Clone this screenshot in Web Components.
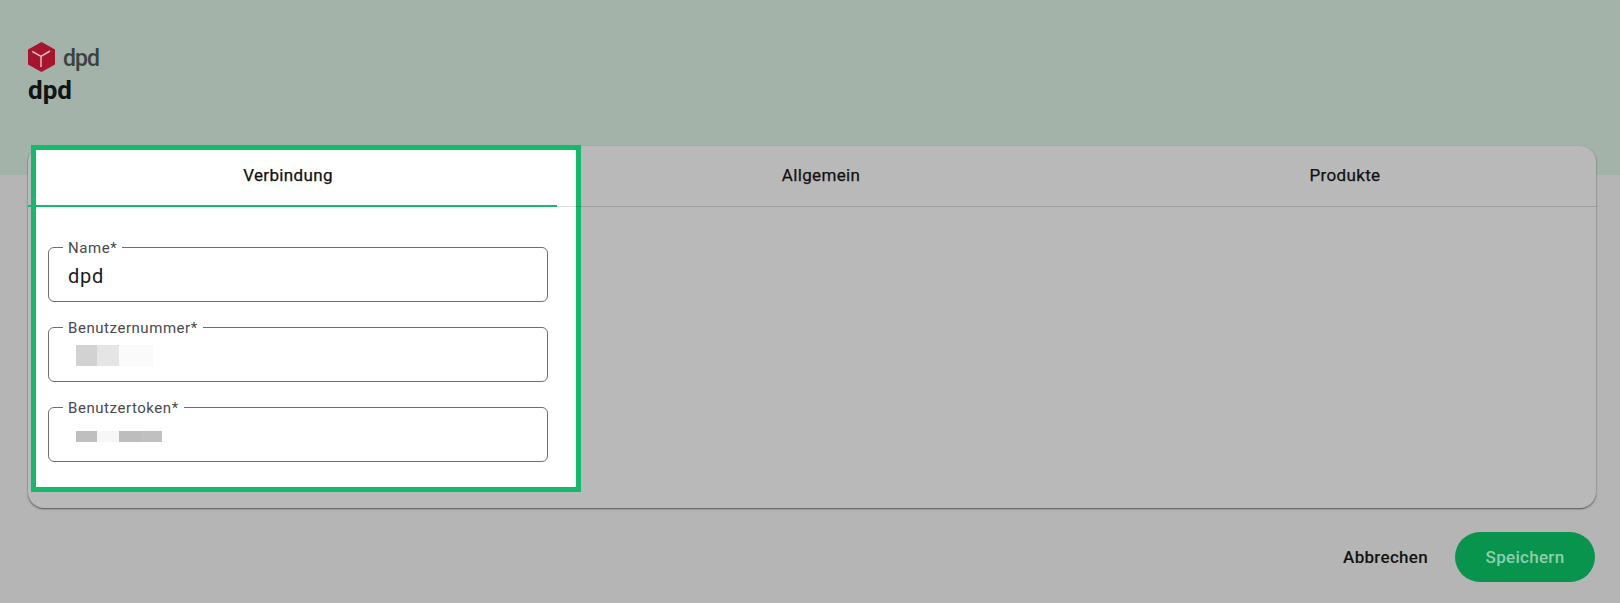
<!DOCTYPE html>
<html lang="de"><head><meta charset="utf-8"><title>dpd</title>
<style>
html,body{margin:0;padding:0}
body{height:603px;overflow:hidden;font-family:Roboto,"Liberation Sans",sans-serif;background:linear-gradient(#a3b3aa 0 175px,#b5b5b5 175px)}
</style></head><body>
<dpd-app></dpd-app>
<template id="app-t"><style>
:host{display:block;padding:42px 24px 0 28px}
.actions{display:flex;justify-content:flex-end;align-items:center;gap:27px;margin-top:24px;padding-right:1px}
</style>
<brand-head></brand-head>
<settings-card></settings-card>
<div class="actions"><action-btn>Abbrechen</action-btn><action-btn primary>Speichern</action-btn></div>
</template>

<template id="head-t"><style>
:host{display:block;height:104px;color:#111}
.logo{display:flex;align-items:center;gap:8px;height:30px}
svg{display:block;width:27px;height:30px}
.word{font-size:23px;font-weight:500;color:#3b4140;letter-spacing:-1px;line-height:30px;position:relative;top:1.5px}
h1{margin:0;font-size:26px;line-height:30px;font-weight:700;color:#101412;margin-top:3px}
</style>
<div class="logo"><svg viewBox="0 0 27 30"><path d="M13.5 0 27 7.6V22.4L13.5 30 0 22.4V7.6Z" fill="#a6142d"/><path d="M4.3 9.5 13 14.5 22 9M13 14.5V25" fill="none" stroke="#dcbcc0" stroke-width="1.5"/></svg><span class="word">dpd</span></div>
<h1>dpd</h1>
</template>

<template id="card-t"><style>
:host{display:block;position:relative;height:362px;background:#b9b9b9;border-radius:16px;box-shadow:0 1px 2px rgba(0,0,0,.55)}
.spot{position:absolute;left:3px;top:-1px;width:540px;height:337px;background:#fff;border:5px solid #13ba6c}
.tabs{position:relative;display:grid;grid-template-columns:520px 546px 502px;height:60px;border-bottom:1px solid rgba(0,0,0,.15)}
.ind{position:absolute;left:0;bottom:-1px;width:529px;height:2px;background:#13ba6c}
.panel{position:relative;display:flex;flex-direction:column;gap:25px;width:500px;padding:40px 0 0 20px}
</style>
<div class="spot"></div>
<div class="tabs"><tab-item>Verbindung</tab-item><tab-item>Allgemein</tab-item><tab-item>Produkte</tab-item><div class="ind"></div></div>
<div class="panel">
<text-field label="Name*"><span class="val">dpd</span></text-field>
<text-field label="Benutzernummer*"><blur-patch shades="#d2d2d2 #e5e5e5 #fafafa" widths="21 22 34"></blur-patch></text-field>
<text-field label="Benutzertoken*"><blur-patch class="thin" shades="#bfbfbf #f7f7f7 #bdbdbd #c0c0c0" widths="21 22 22 21"></blur-patch></text-field>
</div>
</template>

<template id="tab-t"><style>
:host{display:flex;align-items:center;justify-content:center;padding-bottom:2px;font-size:17px;font-weight:400;-webkit-text-stroke:.25px #111;letter-spacing:.35px;color:#111}
</style><slot></slot></template>

<template id="field-t"><style>
:host{display:block;height:55px}
fieldset{box-sizing:border-box;height:55px;margin:0;padding:0 19px;border:1px solid #6f6f6f;border-radius:6px;display:flex;align-items:center}
legend{padding:0 5px 0 5px;margin-left:-5px;height:0;line-height:0;font-size:15px;letter-spacing:.55px;color:#4a4a4a}
.in{display:flex;align-items:center;box-sizing:border-box;padding-top:2px;font-size:20px;letter-spacing:.8px;color:#1b1b1b;height:100%;width:100%}
::slotted(.val){display:block}
</style>
<fieldset><legend></legend><div class="in"><slot></slot></div></fieldset>
</template>

<template id="blur-t"><style>
:host{display:flex;height:21px;margin-left:8px}
:host(.thin){height:11px;margin-top:2px}
div{height:100%}
</style></template>

<template id="btn-t"><style>
:host{display:inline-flex;align-items:center;justify-content:center;height:50px;font-size:17px;font-weight:500;letter-spacing:.3px;color:#121212;cursor:pointer}
:host([primary]){width:140px;border-radius:25px;background:#08944c;color:#8fcfac}
</style><slot></slot></template>

<script>
function def(name,tpl,init){customElements.define(name,class extends HTMLElement{
 constructor(){super();const r=this.attachShadow({mode:'open'});r.appendChild(document.getElementById(tpl).content.cloneNode(true))}
 connectedCallback(){if(init&&!this._d){this._d=1;init(this)}}
})}
def('dpd-app','app-t');
def('brand-head','head-t');
def('settings-card','card-t');
def('tab-item','tab-t');
def('action-btn','btn-t');
def('text-field','field-t',el=>{el.shadowRoot.querySelector('legend').textContent=el.getAttribute('label')});
def('blur-patch','blur-t',el=>{
 const s=el.getAttribute('shades').split(' '),w=el.getAttribute('widths').split(' ');
 s.forEach((c,i)=>{const d=document.createElement('div');d.style.background=c;d.style.width=w[i]+'px';el.shadowRoot.appendChild(d)});
});
</script>
</body></html>
